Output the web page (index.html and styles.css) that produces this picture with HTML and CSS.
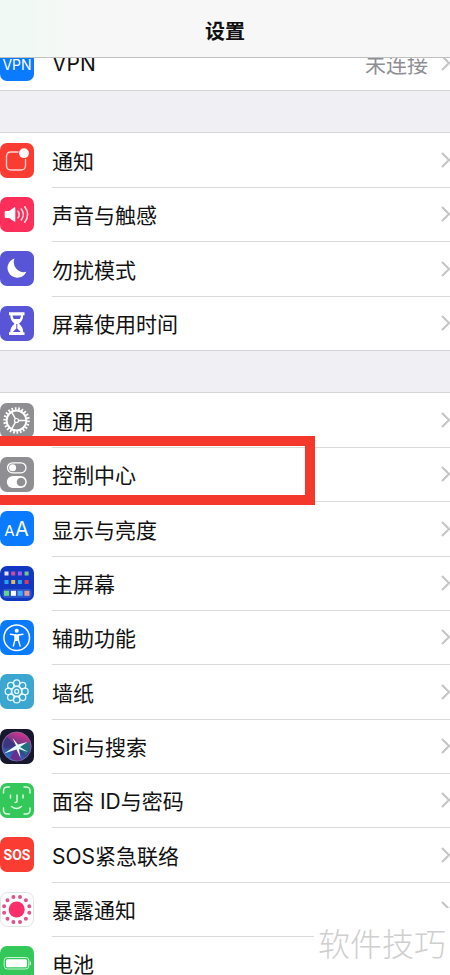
FILE: index.html
```html
<!DOCTYPE html>
<html lang="zh-CN">
<head>
  <meta charset="UTF-8" />
  <meta name="viewport" content="width=device-width, initial-scale=1" />
  <title>设置</title>
  <link rel="stylesheet" href="styles.css">
</head>
<body>
  <div class="screen">
    <header class="navbar">
      <h1>设置</h1>
    </header>

    <main class="settings">
      <ul class="group">
        <li class="row">
          <svg class="icon" viewBox="0 0 34 35">
            <rect width="34" height="35" rx="7" fill="#0a7aff"/>
            <text class="glyph" x="17" y="23.500" font-size="14">VPN</text>
          </svg>
          <a href="#"><span class="label">VPN</span><span class="value">未连接</span><svg class="chevron" viewBox="0 0 9 16"><path d="M1 1l7 7-7 7"/></svg></a>
        </li>
      </ul>

      <ul class="group">
        <li class="row">
          <svg class="icon" viewBox="0 0 34 35">
            <rect width="34" height="35" rx="7" fill="#fb3c32"/>
            <path d="M18.500 9H11q-4.500 0-4.500 4.500v9q0 4.500 4.500 4.500h10q4.500 0 4.500-4.500V16" fill="none" stroke="#ffd5cf" stroke-width="1.300"/>
            <circle cx="24" cy="10.200" r="4.900" fill="#fff"/>
          </svg>
          <a href="#"><span class="label">通知</span><svg class="chevron" viewBox="0 0 9 16"><path d="M1 1l7 7-7 7"/></svg></a>
        </li>
        <li class="row">
          <svg class="icon" viewBox="0 0 34 35">
            <rect width="34" height="35" rx="7" fill="#fc2f5b"/>
            <path d="M4.700 15q0-1 1-1h3.500l5.300-3.700q.8-.5.8.5v13.400q0 1-.8.5l-5.300-3.700H5.700q-1 0-1-1z" fill="#fff"/>
            <path d="M18 14.200q2.400 3.300 0 6.600M21.300 12q4.200 5.500 0 11M24.700 9.800q6 7.700 0 15.400" fill="none" stroke="#ffdbe4" stroke-width="1.600" stroke-linecap="round"/>
          </svg>
          <a href="#"><span class="label">声音与触感</span><svg class="chevron" viewBox="0 0 9 16"><path d="M1 1l7 7-7 7"/></svg></a>
        </li>
        <li class="row">
          <svg class="icon" viewBox="0 0 34 35">
            <rect width="34" height="35" rx="7" fill="#5856d6"/>
            <path d="M14.500 7.500A9.800 9.800 0 1 0 26.300 20.800A10 10 0 0 1 14.500 7.500z" fill="#fff"/>
          </svg>
          <a href="#"><span class="label">勿扰模式</span><svg class="chevron" viewBox="0 0 9 16"><path d="M1 1l7 7-7 7"/></svg></a>
        </li>
        <li class="row">
          <svg class="icon" viewBox="0 0 34 35">
            <rect width="34" height="35" rx="7" fill="#5856d6"/>
            <path d="M9 6.300h15.500v2.900h-1.300c0 4-1.500 6-4.200 8.500 2.700 2.500 4.200 4.500 4.200 8.500h1.300v2.900H9v-2.900h1.300c0-4 1.500-6 4.200-8.500-2.700-2.500-4.200-4.500-4.200-8.500H9z" fill="#fff"/>
            <path d="M12.600 9.500h8.400q-.3 2-1.200 3.500h-6q-.9-1.500-1.200-3.500zM16.300 18h1v4.500l3.500 3.500h-8l3.500-3.500z" fill="#5856d6"/>
          </svg>
          <a href="#"><span class="label">屏幕使用时间</span><svg class="chevron" viewBox="0 0 9 16"><path d="M1 1l7 7-7 7"/></svg></a>
        </li>
      </ul>

      <ul class="group">
        <li class="row">
          <svg class="icon" viewBox="0 0 34 35">
            <rect width="34" height="35" rx="7" fill="#8e8e93"/>
            <g fill="none" stroke="#fff">
              <circle cx="16.500" cy="17.500" r="12" stroke-width="2.600" pathLength="44" stroke-dasharray="1 1"/>
              <circle cx="16.500" cy="17.500" r="9.900" stroke-width="2"/>
              <circle cx="16.500" cy="17.500" r="2" stroke-width="1.200"/>
              <path d="M18.500 17.500h8M15.500 15.800l-4-7M15.500 19.200l-4 7" stroke-width="1.400"/>
            </g>
          </svg>
          <a href="#"><span class="label">通用</span><svg class="chevron" viewBox="0 0 9 16"><path d="M1 1l7 7-7 7"/></svg></a>
        </li>
        <li class="row marked">
          <svg class="icon" viewBox="0 0 34 35">
            <rect width="34" height="35" rx="7" fill="#8e8e93"/>
            <rect x="7.500" y="5.800" width="18.500" height="10" rx="5" fill="none" stroke="#fff" stroke-width="1.300"/>
            <circle cx="12.600" cy="10.800" r="3.500" fill="#fff"/>
            <rect x="6.800" y="19" width="20" height="12" rx="6" fill="#fff"/>
            <circle cx="21" cy="25" r="4.300" fill="#8e8e93"/>
          </svg>
          <a href="#"><span class="label">控制中心</span><svg class="chevron" viewBox="0 0 9 16"><path d="M1 1l7 7-7 7"/></svg></a>
        </li>
        <li class="row">
          <svg class="icon" viewBox="0 0 34 35">
            <rect width="34" height="35" rx="7" fill="#0a7aff"/>
            <text class="glyph" x="9.500" y="25" font-size="15">A</text>
            <text class="glyph" x="22" y="25" font-size="20">A</text>
          </svg>
          <a href="#"><span class="label">显示与亮度</span><svg class="chevron" viewBox="0 0 9 16"><path d="M1 1l7 7-7 7"/></svg></a>
        </li>
        <li class="row">
          <svg class="icon" viewBox="0 0 34 35">
            <rect width="34" height="35" rx="7" fill="#1238c2"/>
            <rect x="2.500" y="23" width="29" height="9" rx="3" fill="#2c55cc"/>
            <path d="M4.500 5.500h4v4h-4z" fill="#e4e6fb"/>
            <path d="M11.200 5.500h4v4h-4z" fill="#d34a9b"/>
            <path d="M17.900 5.500h4v4h-4z" fill="#a45ae8"/>
            <path d="M24.600 5.500h4v4h-4z" fill="#78c58e"/>
            <path d="M4.500 14h4v4h-4zM17.900 14h4v4h-4z" fill="#27a5f4"/>
            <path d="M11.200 14h4v4h-4z" fill="#d8bb67"/>
            <path d="M24.600 14h4v4h-4z" fill="#d63b61"/>
            <path d="M4 24.800h5v5H4z" fill="#63d48b"/>
            <path d="M10.900 24.800h5v5h-5z" fill="#fff"/>
            <path d="M17.700 24.800h5v5h-5z" fill="#49a7f4"/>
            <path d="M24.400 24.800h5v5h-5z" fill="#e29a9b"/>
          </svg>
          <a href="#"><span class="label">主屏幕</span><svg class="chevron" viewBox="0 0 9 16"><path d="M1 1l7 7-7 7"/></svg></a>
        </li>
        <li class="row">
          <svg class="icon" viewBox="0 0 34 35">
            <rect width="34" height="35" rx="7" fill="#0a7aff"/>
            <circle cx="16.700" cy="17.700" r="12.800" fill="none" stroke="#fff" stroke-width="1.500"/>
            <circle cx="16.700" cy="10.800" r="2" fill="#fff"/>
            <path d="M10.500 14.300l4.500.7v5l-1.700 6M22.900 14.300l-4.500.7v5l1.700 6" fill="none" stroke="#fff" stroke-width="1.400" stroke-linecap="round" stroke-linejoin="round"/>
            <path d="M14.800 14.300h3.800v6.700h-3.800z" fill="#fff"/>
          </svg>
          <a href="#"><span class="label">辅助功能</span><svg class="chevron" viewBox="0 0 9 16"><path d="M1 1l7 7-7 7"/></svg></a>
        </li>
        <li class="row">
          <svg class="icon" viewBox="0 0 34 35">
            <rect width="34" height="35" rx="7" fill="#3ba7d0"/>
            <g fill="none" stroke="#e6f7fc" stroke-width="1.300">
              <circle cx="16.700" cy="9" r="3.200"/>
              <circle cx="22.600" cy="11.500" r="3.200"/>
              <circle cx="25" cy="17.400" r="3.200"/>
              <circle cx="22.600" cy="23.300" r="3.200"/>
              <circle cx="16.700" cy="25.700" r="3.200"/>
              <circle cx="10.800" cy="23.300" r="3.200"/>
              <circle cx="8.400" cy="17.400" r="3.200"/>
              <circle cx="10.800" cy="11.500" r="3.200"/>
              <circle cx="16.700" cy="17.400" r="5"/>
              <circle cx="16.700" cy="17.400" r="2"/>
            </g>
          </svg>
          <a href="#"><span class="label">墙纸</span><svg class="chevron" viewBox="0 0 9 16"><path d="M1 1l7 7-7 7"/></svg></a>
        </li>
        <li class="row">
          <svg class="icon" viewBox="0 0 34 35">
            <defs>
              <linearGradient id="siri" x1=".2" y1="1" x2=".6" y2="0">
                <stop offset="0" stop-color="#1d8be0"/>
                <stop offset=".45" stop-color="#3a3c86"/>
                <stop offset="1" stop-color="#d8318c"/>
              </linearGradient>
            </defs>
            <rect width="34" height="35" rx="7" fill="#17182e"/>
            <circle cx="16.700" cy="17.500" r="14.500" fill="url(#siri)" stroke="#8d6fa8" stroke-width=".8"/>
            <path d="M17 17.500L7 8q-4 5-3 11z" fill="#3b3680"/>
            <path d="M17 17.500L29 13q3 7-3 13z" fill="#1e7184"/>
            <path d="M17 17.500L21 31q-6 2-11-2z" fill="#6b2e8e"/>
            <path d="M16 16.500L12.500 9l5.500 6.500 9.500-2.500-7.500 5L28 23l-9-3 1.500 9-4-8.500L4 24.500l9-6z" fill="#eafaff"/>
          </svg>
          <a href="#"><span class="label">Siri与搜索</span><svg class="chevron" viewBox="0 0 9 16"><path d="M1 1l7 7-7 7"/></svg></a>
        </li>
        <li class="row">
          <svg class="icon" viewBox="0 0 34 35">
            <rect width="34" height="35" rx="7" fill="#34c759"/>
            <g fill="none" stroke="#d9fbe0" stroke-width="1.500" stroke-linecap="round">
              <path d="M3.500 10V8q0-4 4-4h2M24 4h2q4 0 4 4v2M30 25v2q0 4-4 4h-2M9.500 31h-2q-4 0-4-4v-2"/>
              <path d="M10.500 12v3M23 12v3M17 12v6q0 1.500-2 1.500M11.500 23.500q5 4 10 0"/>
            </g>
          </svg>
          <a href="#"><span class="label">面容 ID与密码</span><svg class="chevron" viewBox="0 0 9 16"><path d="M1 1l7 7-7 7"/></svg></a>
        </li>
        <li class="row">
          <svg class="icon" viewBox="0 0 34 35">
            <rect width="34" height="35" rx="7" fill="#fb3c32"/>
            <text class="glyph sos" x="17" y="23" font-size="14">SOS</text>
          </svg>
          <a href="#"><span class="label">SOS紧急联络</span><svg class="chevron" viewBox="0 0 9 16"><path d="M1 1l7 7-7 7"/></svg></a>
        </li>
        <li class="row">
          <svg class="icon" viewBox="0 0 34 35">
            <rect x=".5" y=".5" width="33" height="34" rx="7" fill="#fff" stroke="#e2e2e5"/>
            <circle cx="16.700" cy="17.500" r="8" fill="#fc2f6b"/>
            <circle cx="16.700" cy="17.500" r="13" fill="none" stroke="#e0508c" stroke-width="4" stroke-linecap="round" pathLength="12" stroke-dasharray="0 1" stroke-dashoffset=".5"/>
          </svg>
          <a href="#"><span class="label">暴露通知</span><svg class="chevron" viewBox="0 0 9 16"><path d="M1 1l7 7-7 7"/></svg></a>
        </li>
        <li class="row">
          <svg class="icon" viewBox="0 0 34 35">
            <rect width="34" height="35" rx="7" fill="#34c759"/>
            <rect x="4.200" y="11.500" width="24.600" height="11.500" rx="3" fill="none" stroke="#c9f5d2"/>
            <rect x="6" y="13.300" width="21" height="8" rx="1.500" fill="#fff"/>
            <path d="M30.300 15.500v3.500" stroke="#c9f5d2" stroke-width="1.300"/>
          </svg>
          <a href="#"><span class="label">电池</span><svg class="chevron" viewBox="0 0 9 16"><path d="M1 1l7 7-7 7"/></svg></a>
        </li>
      </ul>
    </main>

    <div class="watermark">软件技巧</div>
  </div>
</body>
</html>
```
FILE: styles.css
```css
*, *::after {
  box-sizing: border-box;
}

body {
  margin: 0;
  font-family: Inter, "Noto Sans CJK SC", sans-serif;
  font-size: 21px;
  color: #111;
  background-color: #efeff4;
}

.screen {
  position: relative;
  height: 100vh;
  overflow: hidden;
}

.navbar {
  position: absolute;
  top: 0;
  left: 0;
  right: 0;
  z-index: 10;
  height: 58px;
  padding-top: 4px;
  display: flex;
  align-items: center;
  justify-content: center;
  background: linear-gradient(to right, #effaf3, #f7f7f7 20%);
  border-bottom: 1px solid #c0c0c2;
}

.navbar h1 {
  margin: 0;
  font-size: 20px;
  font-weight: 700;
}

.settings {
  display: flex;
  flex-direction: column;
  gap: 42px;
  padding-top: 36px;
}

.group {
  margin: 0;
  padding: 0;
  list-style: none;
  background-color: #fff;
  border-bottom: 1px solid #d4d4d8;
  box-shadow: 0 -1px #d4d4d8;
}

.row {
  position: relative;
  display: flex;
  align-items: center;
  gap: 18px;
  height: 54px;
}

.row:nth-child(3n) {
  height: 55px;
}

.icon {
  flex: none;
  width: 34px;
  height: 35px;
}

.row a {
  flex: 1;
  align-self: stretch;
  display: flex;
  align-items: center;
  box-shadow: 0 1px #d9d9dc;
  color: inherit;
  text-decoration: none;
}

.row:last-child a {
  box-shadow: none;
}

.label {
  flex: 1;
}

.value {
  margin-right: 13px;
  color: #8e8e93;
}

.chevron {
  flex: none;
  width: 9px;
  height: 16px;
  fill: none;
  stroke: #c4c4c7;
  stroke-width: 2;
}

.glyph {
  fill: #fff;
  text-anchor: middle;
}

.sos {
  font-family: "Liberation Sans Narrow", Roboto, sans-serif;
  font-weight: 700;
}

/* Red frame round the row to tap */
.marked::after {
  content: "";
  position: absolute;
  top: -11px;
  bottom: -4px;
  left: 0;
  width: 70%;
  border: 10px solid #f5382c;
  border-left: none;
  z-index: 1;
}

.watermark {
  position: absolute;
  right: 0;
  bottom: 0;
  z-index: 5;
  height: 67px;
  padding: 0 4px;
  display: flex;
  align-items: center;
  font-size: 32px;
  font-weight: 300;
  color: #cfcfcf;
  background-color: #fff;
}
```
